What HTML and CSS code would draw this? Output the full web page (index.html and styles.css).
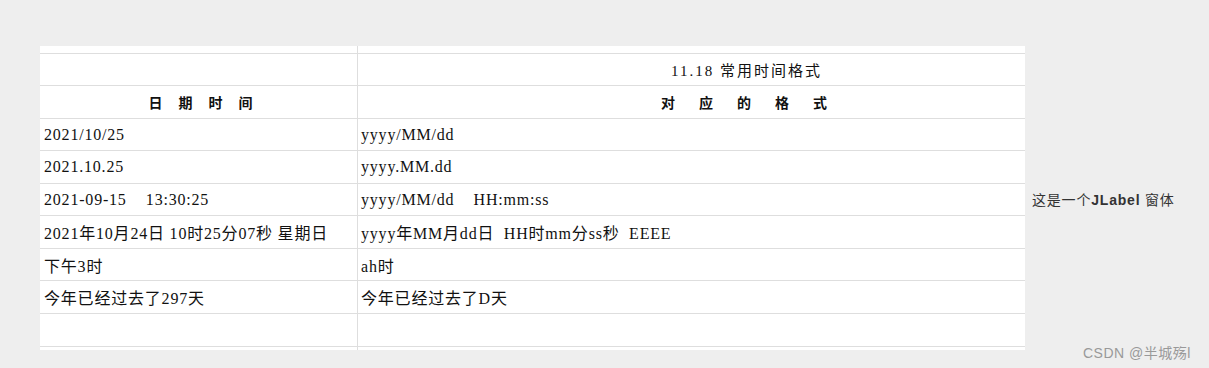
FILE: index.html
```html
<!DOCTYPE html>
<html lang="zh">
<head>
<meta charset="utf-8">
<title>JLabel</title>
<link rel="stylesheet" href="styles.css">
</head>
<body>
<div class="window">
  <div class="sheet">
    <div class="row top"><div class="cell left"></div><div class="cell right"></div></div>
    <div class="row r32"><div class="cell left"></div><div class="cell right title">11.18 常用时间格式</div></div>
    <div class="row r33"><div class="cell left head-l">日期时间</div><div class="cell right head-r">对应的格式</div></div>
    <div class="row r32"><div class="cell left">2021/10/25</div><div class="cell right">yyyy/MM/dd</div></div>
    <div class="row r33"><div class="cell left">2021.10.25</div><div class="cell right">yyyy.MM.dd</div></div>
    <div class="row r32"><div class="cell left">2021-09-15&nbsp;&nbsp;&nbsp;&nbsp;13:30:25</div><div class="cell right">yyyy/MM/dd&nbsp;&nbsp;&nbsp;&nbsp;HH:mm:ss</div></div>
    <div class="row r33"><div class="cell left">2021年10月24日 10时25分07秒 星期日</div><div class="cell right">yyyy年MM月dd日&nbsp;&nbsp;HH时mm分ss秒&nbsp;&nbsp;EEEE</div></div>
    <div class="row r32"><div class="cell left">下午3时</div><div class="cell right">ah时</div></div>
    <div class="row r33"><div class="cell left">今年已经过去了297天</div><div class="cell right">今年已经过去了D天</div></div>
    <div class="row r33"><div class="cell left"></div><div class="cell right"></div></div>
    <div class="row bottom"><div class="cell left"></div><div class="cell right"></div></div>
  </div>
  <div class="label">这是一个<b>JLabel</b> 窗体</div>
</div>
<div class="watermark">CSDN @半城殇l</div>
</body>
</html>
```
FILE: styles.css
```css
html, body {
  margin: 0;
  padding: 0;
}
body {
  background: #eeeeee;
  width: 1209px;
  height: 368px;
  position: relative;
  overflow: hidden;
}
.window {
  display: flex;
  align-items: center;
  padding: 46px 0 0 40px;
}
.sheet {
  width: 985px;
  background: #ffffff;
  display: flex;
  flex-direction: column;
  font-family: "Liberation Serif", "Noto Sans CJK SC", serif;
  font-size: 16px;
  color: #111;
}
.row {
  display: flex;
  box-sizing: border-box;
  border-top: 1px solid #dedede;
}
.row.top { height: 7px; border-top: none; }
.row.r32 { height: 32px; }
.row.r33 { height: 33px; }
.row.bottom { height: 4px; }
.cell {
  box-sizing: border-box;
  display: flex;
  align-items: center;
  white-space: pre;
  letter-spacing: 0.8px;
}
.cell.left {
  width: 318px;
  padding-left: 4px;
  border-right: 1px solid #dedede;
}
.cell.right {
  flex: 1;
  padding-left: 3px;
}
.cell.title {
  padding-left: 313px;
  font-size: 15px;
  letter-spacing: 2px;
}
.cell.head-l {
  justify-content: center;
  font-size: 14px;
  font-weight: bold;
  letter-spacing: 16px;
  padding-left: 20px;
}
.cell.head-r {
  padding-left: 303px;
  font-size: 14px;
  font-weight: bold;
  letter-spacing: 24px;
}
.label {
  margin-left: 7px;
  margin-top: 2px;
  font-family: "Liberation Sans", "Noto Sans CJK SC", sans-serif;
  font-size: 14px;
  color: #333;
  letter-spacing: 0.8px;
}
.label b { font-weight: bold; }
.watermark {
  position: absolute;
  left: 1083px;
  top: 342px;
  font-family: "Liberation Sans", "Noto Sans CJK SC", sans-serif;
  font-size: 14px;
  color: #999;
  letter-spacing: 0.5px;
}
```
